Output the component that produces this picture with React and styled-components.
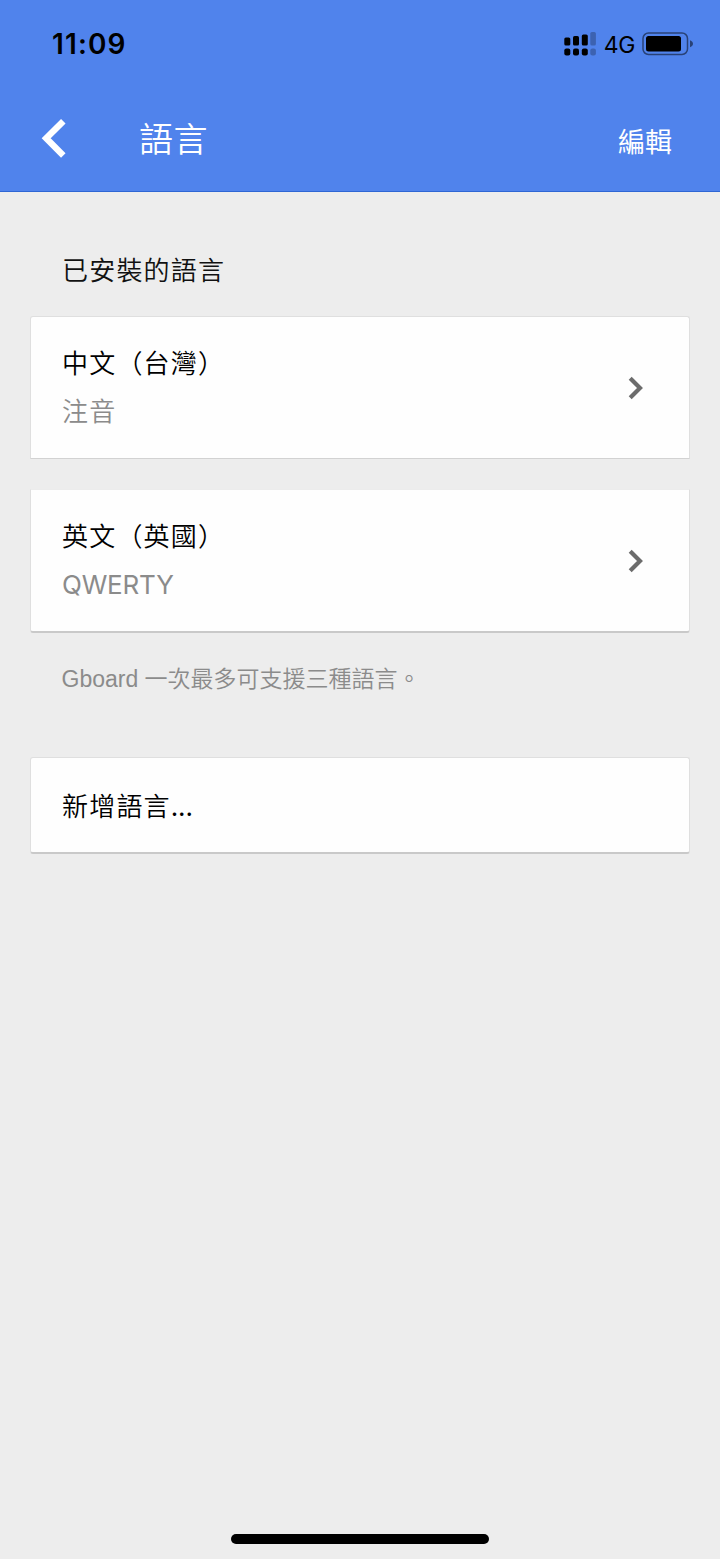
import React from 'react';
import styled, { createGlobalStyle } from 'styled-components';

const GlobalStyle = createGlobalStyle`
  * {
    box-sizing: border-box;
  }

  body {
    margin: 0;
    background: #ededed;
    font-family: Inter, 'Noto Sans CJK TC', sans-serif;
  }
`;

const Screen = styled.div`
  display: flex;
  flex-direction: column;
  width: 720px;
  height: 1559px;
  background: #ededed;
  overflow: hidden;
`;

const Header = styled.header`
  height: 192px;
  background: #5083ec;
  border-bottom: 1px solid #2f66d4;
`;

const StatusBar = styled.div`
  display: flex;
  align-items: center;
  height: 88px;
  padding: 0 26px 0 52px;
  color: #000;
`;

const Time = styled.span`
  flex: 1;
  font-size: 28px;
  font-weight: 600;
  line-height: 34px;
  letter-spacing: 1.1px;
`;

const Network = styled.span`
  margin: 2px 7px 0 8px;
  font-size: 23px;
  line-height: 28px;
  letter-spacing: -0.4px;
`;

const NavBar = styled.div`
  display: flex;
  align-items: center;
  height: 103px;
  padding: 0 48px 4px 41px;
  color: #fff;
`;

const BackButton = styled.button`
  display: flex;
  width: 98px;
  padding: 0;
  border: none;
  background: none;
  color: inherit;
`;

const Title = styled.h1`
  flex: 1;
  margin: 0;
  padding-top: 4px;
  font-size: 34px;
  font-weight: 350;
  line-height: 48px;
  letter-spacing: 0.4px;
`;

const EditButton = styled.button`
  padding: 11px 0 0;
  border: none;
  background: none;
  color: inherit;
  font-family: inherit;
  font-size: 27px;
  font-weight: 400;
  line-height: 40px;
`;

const Content = styled.main`
  display: flex;
  flex: 1;
  flex-direction: column;
  padding: 59px 30px 0;
`;

const SectionTitle = styled.h2`
  margin: 0 0 25px;
  padding-left: 32px;
  color: #111;
  font-size: 26px;
  font-weight: 350;
  line-height: 40px;
  letter-spacing: 1.2px;
`;

const Card = styled.div`
  display: flex;
  align-items: center;
  justify-content: space-between;
  height: ${props => props.$height}px;
  margin-bottom: ${props => props.$gap || 0}px;
  padding: ${props => (props.$single ? 3 : 1)}px 45px 0 31px;
  border: 1px solid #dfdfdf;
  border-top-color: ${props => (props.$last ? '#ececec' : '#dfdfdf')};
  border-bottom: ${props => (props.$raised ? '2px solid #c9c9c9' : '1px solid #d2d2d2')};
  border-radius: ${props => props.$radius || '3px'};
  background: #fefefe;
`;

const CardText = styled.div`
  display: flex;
  flex-direction: column;
  gap: 8px;
`;

const Name = styled.span`
  color: #000;
  font-size: 26px;
  font-weight: 350;
  line-height: 40px;
  letter-spacing: 1.2px;
`;

const Dots = styled.span`
  font-weight: 400;
  letter-spacing: -0.2px;
`;

const Layout = styled.span`
  color: #8b8b8b;
  font-size: 26px;
  font-weight: ${props => (props.$latin ? 400 : 350)};
  line-height: 40px;
  letter-spacing: ${props => (props.$latin ? '-0.2px' : '1.2px')};
`;

const Note = styled.p`
  margin: 0 0 61px;
  padding-left: 31.5px;
  color: #8b8b8b;
  font-family: 'Liberation Sans', 'Noto Sans CJK TC', sans-serif;
  font-size: 23px;
  font-weight: 350;
  line-height: 34px;
`;

const HomeIndicator = styled.div`
  align-self: center;
  width: 258px;
  height: 10px;
  margin-bottom: 15px;
  border-radius: 5px;
  background: #000;
`;

const SignalIcon = () => (
  <svg width="32" height="25" viewBox="0 0 32 25">
    <rect x="0.3" y="5.5" width="6" height="8" rx="1.6" />
    <rect x="9" y="4" width="6" height="9.5" rx="1.6" />
    <rect x="17.8" y="2.5" width="6" height="11" rx="1.6" />
    <rect x="26.3" y="0" width="5.6" height="13.5" rx="1.6" opacity="0.25" />
    <rect x="0.3" y="16.5" width="6" height="7" rx="2" />
    <rect x="9" y="16.5" width="6" height="7" rx="2" />
    <rect x="17.8" y="16.5" width="6" height="7" rx="2" />
    <rect x="26.3" y="16.5" width="5.6" height="7" rx="2" opacity="0.25" />
  </svg>
);

const BatteryIcon = () => (
  <svg width="52" height="24" viewBox="0 0 52 24">
    <rect x="1" y="1" width="44.5" height="21.5" rx="5.5" fill="none" stroke="#000" strokeWidth="1.5" opacity="0.5" />
    <rect x="4" y="4" width="35" height="15.5" rx="2.5" />
    <path d="M48 8.3C50 9 51 10.3 51 11.8C51 13.3 50 14.6 48 15.3Z" opacity="0.5" />
  </svg>
);

const BackIcon = () => (
  <svg width="26" height="40" viewBox="0 0 26 40">
    <path d="M22.3 3.2L5.2 20.3L22.3 37.4" fill="none" stroke="#fff" strokeWidth="6.4" />
  </svg>
);

const ChevronIcon = () => (
  <svg width="16" height="24" viewBox="0 0 16 24">
    <path d="M2.2 2.2L12 12L2.2 21.8" fill="none" stroke="#6c6c6c" strokeWidth="4.2" />
  </svg>
);

const languages = [
  { name: '中文（台灣）', layout: '注音', height: 143, gap: 30, radius: '3px 3px 0 0' },
  { name: '英文（英國）', layout: 'QWERTY', height: 144, gap: 29, radius: '0 0 3px 3px', latin: true, last: true },
];

const App = () => (
  <>
    <GlobalStyle />
    <Screen>
      <Header>
        <StatusBar>
          <Time>11:09</Time>
          <SignalIcon />
          <Network>4G</Network>
          <BatteryIcon />
        </StatusBar>
        <NavBar>
          <BackButton aria-label="返回">
            <BackIcon />
          </BackButton>
          <Title>語言</Title>
          <EditButton>編輯</EditButton>
        </NavBar>
      </Header>
      <Content>
        <SectionTitle>已安裝的語言</SectionTitle>
        {languages.map(item => (
          <Card
            key={item.name}
            $height={item.height}
            $gap={item.gap}
            $radius={item.radius}
            $last={item.last}
            $raised={item.last}
          >
            <CardText>
              <Name>{item.name}</Name>
              <Layout $latin={item.latin}>{item.layout}</Layout>
            </CardText>
            <ChevronIcon />
          </Card>
        ))}
        <Note>Gboard 一次最多可支援三種語言。</Note>
        <Card $height={97} $raised $single>
          <Name>
            新增語言<Dots>...</Dots>
          </Name>
        </Card>
      </Content>
      <HomeIndicator />
    </Screen>
  </>
);

export default App;
